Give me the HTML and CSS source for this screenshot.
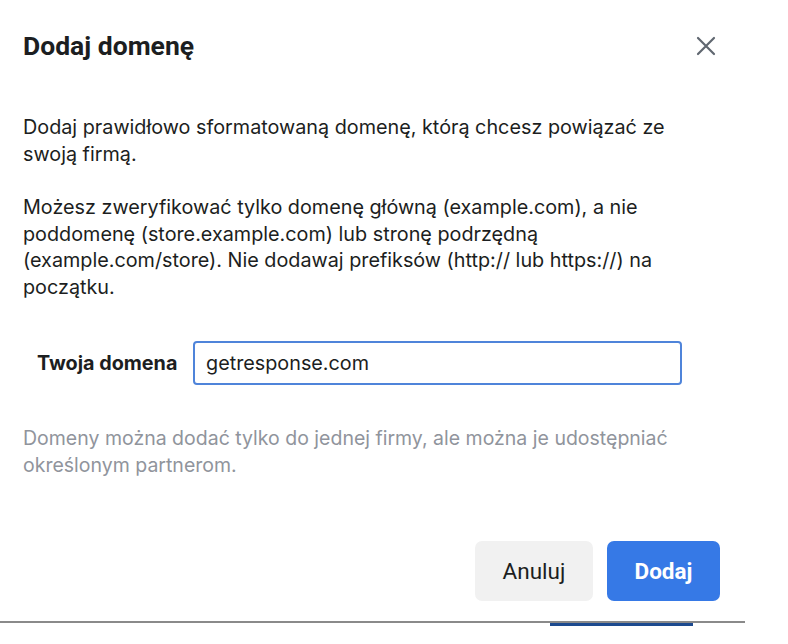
FILE: index.html
```html
<!DOCTYPE html>
<html lang="pl">
<head>
<meta charset="utf-8">
<title>Dodaj domenę</title>
<link rel="stylesheet" href="styles.css">
</head>
<body>
<div class="dialog">
  <div class="header">
    <h1 class="title">Dodaj domenę</h1>
    <button class="close" aria-label="Zamknij">
      <svg width="20" height="20" viewBox="0 0 20 20"><path d="M2 2 L18 18 M18 2 L2 18" stroke="#606770" stroke-width="2.2" stroke-linecap="round" fill="none"/></svg>
    </button>
  </div>
  <div class="content">
    <p class="text">Dodaj prawidłowo sformatowaną domenę, którą chcesz powiązać ze swoją firmą.</p>
    <p class="text">Możesz zweryfikować tylko domenę główną (example.com), a nie poddomenę (store.example.com) lub stronę podrzędną (example.com/store). Nie dodawaj prefiksów (http:// lub https://) na początku.</p>
    <div class="field">
      <label class="label">Twoja domena</label>
      <div class="input">getresponse.com</div>
    </div>
    <p class="hint">Domeny można dodać tylko do jednej firmy, ale można je udostępniać określonym partnerom.</p>
  </div>
  <div class="footer">
    <button class="btn btn-secondary">Anuluj</button>
    <button class="btn btn-primary">Dodaj</button>
  </div>
</div>
<div class="peek"></div>
</body>
</html>
```

FILE: styles.css
```css
html, body {
  margin: 0;
  padding: 0;
  background: #ffffff;
}
body {
  font-family: "Inter", "Liberation Sans", sans-serif;
  color: #1c1e21;
}
.dialog {
  width: 745px;
  height: 621px;
  border-bottom: 2px solid #8a8a8a;
  display: flex;
  flex-direction: column;
}
.header {
  display: flex;
  align-items: center;
  justify-content: space-between;
  padding: 29px 29px 0 23px;
  height: 34px;
}
.title {
  margin: 0;
  font-family: "Roboto", "Liberation Sans", sans-serif;
  font-weight: 700;
  font-size: 26.5px;
  line-height: 34px;
  color: #1c1e21;
}
.close {
  border: 0;
  background: none;
  padding: 0;
  width: 20px;
  height: 20px;
  display: flex;
  margin-top: -1px;
}
.content {
  padding: 0 23px;
  flex: 1;
}
.text {
  margin: 0;
  max-width: 690px;
  font-size: 19.8px;
  line-height: 26.5px;
}
.text:first-child {
  margin-top: 51px;
}
.text + .text {
  margin-top: 27px;
}
.field {
  display: flex;
  align-items: center;
  margin-top: 41px;
  padding-left: 14px;
}
.label {
  font-weight: 700;
  font-size: 19.8px;
  width: 156px;
}
.input {
  width: 489px;
  height: 44px;
  box-sizing: border-box;
  border: 2px solid #4f84da;
  border-radius: 4px;
  padding: 0 11px;
  display: flex;
  align-items: center;
  font-size: 19.8px;
}
.hint {
  margin: 40px 0 0;
  max-width: 690px;
  color: #90949c;
  font-size: 19.5px;
  line-height: 27px;
}
.footer {
  display: flex;
  justify-content: flex-end;
  gap: 14px;
  padding: 0 25px 20px 0;
}
.btn {
  height: 60px;
  border: 0;
  border-radius: 7px;
  font-family: "Roboto", "Liberation Sans", sans-serif;
  font-size: 22.5px;
}
.btn-secondary {
  width: 118px;
  background: #f1f1f1;
  color: #1c1e21;
}
.btn-primary {
  width: 113px;
  background: #3679e6;
  color: #ffffff;
  font-weight: 700;
}
.peek {
  margin-left: 550px;
  width: 143px;
  height: 3px;
  background: #1d4a8f;
}
```
